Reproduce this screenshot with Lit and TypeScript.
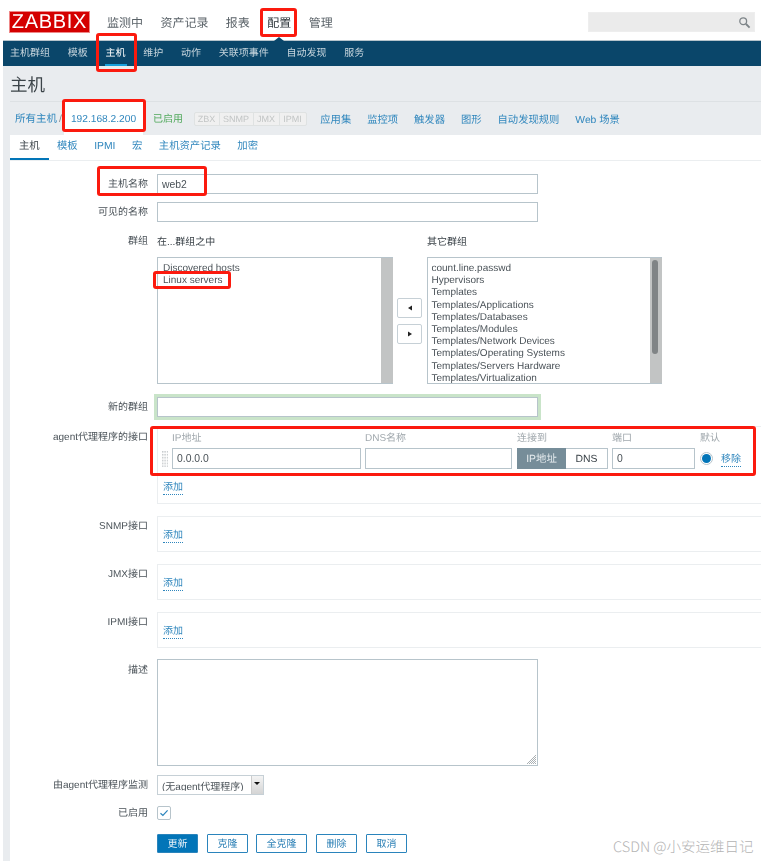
import { LitElement, html, css } from "lit";
import { customElement } from "lit/decorators.js";

@customElement("app-root")
export class AppRoot extends LitElement {
  static styles = css`
    :host {
      display: block;
      position: relative;
      width: 761px;
      height: 861px;
      overflow: hidden;
      background: #fff;
      color: #3a4248;
      font-family: "Liberation Sans", "Noto Sans CJK SC", sans-serif;
      font-size: 10px;
      text-rendering: geometricPrecision;
    }
    a { color: #2f86bd; text-decoration: none; }
    .soft { filter: blur(0.35px); }
    .header { height: 40px; display: flex; align-items: center; padding: 4px 6px 0 10px; box-sizing: border-box; }
    .logo {
      width: 79px; height: 20px; background: #d40000; color: #fff; box-sizing: border-box;
      font-size: 20px; line-height: 20px; text-align: center; letter-spacing: 0.7px;
      margin-right: 18px; box-shadow: 0 0 0 1px #e88;
    }
    .topnav { display: flex; gap: 17.4px; font-size: 12px; color: #5a6268; }
    .topnav .on { color: #2b3338; }
    .search {
      margin-left: auto; width: 167px; height: 20px; background: #ebebeb; border: 1px solid #eee; box-sizing: border-box;
      display: flex; align-items: center; justify-content: flex-end; padding-right: 3px;
    }
    .subnav {
      margin-left: 3px; height: 26px; background: #0a466a; border-top: 1px solid #b6c4cc; box-sizing: border-box;
      display: flex; gap: 17.75px; padding-left: 7px; color: #c8d6de; font-size: 10px; line-height: 26px;
    }
    .subnav .on { color: #fff; position: relative; }
    .subnav .on::after { content: ""; position: absolute; left: -1px; right: -1px; bottom: 0; height: 2px; background: #18a0dc; }
    .notch {
      position: absolute; left: 274px; top: 37px; width: 0; height: 0;
      border-left: 5px solid transparent; border-right: 5px solid transparent; border-bottom: 4px solid #0a466a;
    }
    .page { margin-left: 3px; background: #e9ecef; height: 795px; }
    .title { height: 35px; margin-left: 7px; font-size: 17.5px; line-height: 38px; color: #3c4449; border-bottom: 1px solid #dde1e4; box-sizing: content-box; }
    .crumbs { height: 33px; display: flex; align-items: center; padding-left: 12px; font-size: 10.5px; }
    .crumbs .sep { width: 7px; text-align: center; color: #888; }
    .crumbs .ip { width: 79px; height: 100%; background: #fff; text-align: center; line-height: 35px; font-size: 10.2px; margin-right: 10px; }
    .enabled { color: #4fa85a; margin: 0 10.5px 2px 0; font-size: 10px; }
    .tags { display: flex; margin-right: 13.8px; height: 14px; background: #f0f0f0; border: 1px solid #dfe2e2; box-sizing: border-box; border-radius: 2px; }
    .tags span { color: #c2c5c5; font-size: 9px; line-height: 12px; text-align: center; border-right: 1px solid #dfe2e2; box-sizing: border-box; }
    .tags span:last-child { border-right: 0; }
    .tags .t25 { width: 25px; }
    .tags .t34 { width: 34px; }
    .tags .t26 { width: 26px; }
    .links { display: flex; gap: 16px; font-size: 10.3px; }
    .panel { margin-left: 7px; background: #fff; height: 727px; margin-top: 0; }
    .tabs { height: 25px; display: flex; border-bottom: 1px solid #ebeef0; font-size: 10.35px; line-height: 24px; }
    .tabs a { padding: 0 8.25px; height: 25px; box-sizing: border-box; }
    .tabs .on { color: #3a4248; padding: 0 9px; border-bottom: 2px solid #0275b8; }
    .form { display: flex; flex-direction: column; }
    .row { display: grid; grid-template-columns: 138px 604px; column-gap: 9px; }
    .lab { text-align: right; line-height: 14px; color: #4a5258; padding-top: 1px; }
    input, .ta {
      display: block; box-sizing: border-box; height: 20px; border: 1px solid #b7c4cb; background: #fff; padding: 0 4px;
      font: inherit; font-size: 10.4px; color: #4a5258; outline: none; border-radius: 0;
    }
    .wide { width: 381px; }
    .r1 { margin-top: 13px; }
    .r1 .lab, .r2 .lab { line-height: 19px; }
    .r2 { margin-top: 8px; }
    .r3 { margin-top: 12px; line-height: 14px; }
    .glabels { display: flex; padding-top: 2px; }
    .glabels span:first-child { width: 270px; }
    .lists { display: flex; align-items: center; margin-top: 7px; }
    .list {
      width: 236px; height: 127px; box-sizing: border-box; border: 1px solid #b7c4cb; border-right: 0; display: flex; overflow: hidden;
      line-height: 12.2px; color: #4a5258; font-size: 10px;
    }
    .list.other { width: 235px; }
    .items { flex: 1; padding: 5px 5px 0; white-space: nowrap; }
    .items.right { padding-left: 3.5px; }
    .bar { width: 12px; background: #c2c4c4; position: relative; }
    .thumb { position: absolute; left: 2px; top: 2px; width: 6px; height: 94px; background: #808486; border-radius: 3px; }
    .mid { width: 34px; padding-right: 1px; box-sizing: border-box; display: flex; flex-direction: column; align-items: center; gap: 6px; }
    .mv {
      width: 25px; height: 20px; box-sizing: border-box; border: 1px solid #c6d0d6; border-radius: 2px; background: #fff;
      display: flex; align-items: center; justify-content: center;
    }
    .r4 { margin-top: 13px; }
    .r4 .lab { line-height: 19px; }
    .hl { box-shadow: 0 0 0 3px #c9e4c9; }
    .box { border: 1px solid #ebeef0; border-right: 0; box-sizing: border-box; padding-left: 4px; }
    .iface { margin-top: 9px; }
    .iface .lab { padding-top: 5px; }
    .iface .box { height: 78px; }
    .ifgrid { display: grid; grid-template-columns: 10px 193px 152px 95px 88px 60px; align-items: center; }
    .ifhead { color: #a0a8ad; line-height: 12px; height: 18px; margin-top: 3px; }
    .handle { width: 6px; height: 16px; }
    .ip-in { width: 189px; height: 21px; }
    .dns-in { width: 147px; height: 21px; }
    .port-in { width: 83px; height: 21px; }
    .toggle { display: flex; width: 91px; height: 21px; box-sizing: border-box; border: 1px solid #b7c4cb; font-size: 10.4px; line-height: 21px; text-align: center; }
    .toggle .a { width: 49px; background: #768d99; color: #e6ecef; margin: -1px 0 -1px -1px; line-height: 23px; }
    .toggle .b { flex: 1; color: #3a4248; }
    .defcell { display: flex; align-items: center; gap: 8px; }
    .radio {
      width: 13px; height: 13px; box-sizing: border-box; border-radius: 50%; border: 1px solid #b7c4cb; background: #fff;
      display: flex; align-items: center; justify-content: center;
    }
    .radio i { display: block; width: 9px; height: 9px; border-radius: 50%; background: #0275b8; }
    .dot { border-bottom: 1px dotted #2f86bd; line-height: 13px; display: inline-block; font-size: 10px; }
    .defcell .dot { margin-top: 3px; }
    .add { display: block; margin-left: 1px; width: fit-content; }
    .iface .add { margin-top: 12px; }
    .sn { margin-top: 12px; }
    .sn .lab { padding-top: 4px; }
    .sn .box { height: 36px; }
    .sn .add { margin-top: 12px; }
    .desc { margin-top: 11px; }
    .desc .lab { padding-top: 5px; }
    .ta { width: 381px; height: 107px; position: relative; }
    .grip { position: absolute; right: 0; bottom: 0; }
    .r5 { margin-top: 9px; }
    .r5 .lab { line-height: 19px; }
    .sel { width: 107px; height: 20px; box-sizing: border-box; border: 1px solid #c6d0d6; display: flex; font-size: 10px; }
    .sel .t { flex: 1; padding: 5px 0 0 4px; height: 9.5px; line-height: 14px; white-space: nowrap; color: #4a5258; overflow: hidden; }
    .sel .arr { width: 11px; background: linear-gradient(#f4f4f4, #d4d4d4); border-left: 1px solid #ccc; position: relative; }
    .sel .arr::after {
      content: ""; position: absolute; left: 2px; top: 6px; width: 0; height: 0;
      border-left: 3px solid transparent; border-right: 3px solid transparent; border-top: 3px solid #111;
    }
    .r6 { margin-top: 11px; }
    .chk { width: 14px; height: 14px; box-sizing: border-box; border: 1px solid #b7c4cb; border-radius: 2px; display: flex; align-items: center; justify-content: center; }
    .r7 { margin-top: 13px; }
    .btns { display: flex; }
    .btn {
      height: 19px; box-sizing: border-box; border: 1px solid #2a84bc; border-radius: 1px; color: #2a7fb5; background: #fff;
      font-size: 10px; line-height: 19px; text-align: center; width: 41px; margin-right: 9px;
    }
    .btn.pri { background: #0275b8; color: #e8f2f8; }
    .btn.tight { margin-right: 8px; }
    .btn.w { width: 51px; }
    .mark { position: absolute; border: 3px solid #fb1a0e; border-radius: 3px; box-sizing: border-box; pointer-events: none; }
    .wm { position: absolute; left: 613px; top: 837px; font-size: 14.5px; line-height: 20px; color: #b4b4b4; white-space: nowrap; font-family: "Noto Sans CJK SC", "Liberation Sans", sans-serif; font-weight: 300; }
  `;

  private groups = [
    "count.line.passwd", "Hypervisors", "Templates", "Templates/Applications", "Templates/Databases",
    "Templates/Modules", "Templates/Network Devices", "Templates/Operating Systems", "Templates/Servers Hardware", "Templates/Virtualization",
  ];

  private handle() {
    return html`<svg class="handle" viewBox="0 0 6 16">
      <defs><pattern id="p" width="2.4" height="2.9" patternUnits="userSpaceOnUse"><rect width="1.4" height="1.6" fill="#c5c9cb"/></pattern></defs>
      <rect width="6" height="16" fill="url(#p)"/></svg>`;
  }

  render() {
    return html`
      <div class="soft">
        <div class="header">
          <div class="logo">ZABBIX</div>
          <div class="topnav"><span>监测中</span><span>资产记录</span><span>报表</span><span class="on">配置</span><span>管理</span></div>
          <div class="search">
            <svg width="13" height="13" viewBox="0 0 13 13" fill="none" stroke="#7d8488"><circle cx="5.2" cy="5.2" r="3.4" stroke-width="1.3"/><path d="M8 8l3.6 3.6" stroke-width="1.8"/></svg>
          </div>
        </div>
        <div class="subnav">
          <span>主机群组</span><span>模板</span><span class="on">主机</span><span>维护</span><span>动作</span><span>关联项事件</span><span>自动发现</span><span>服务</span>
        </div>
        <div class="notch"></div>
        <div class="page">
          <div class="title">主机</div>
          <div class="crumbs">
            <a>所有主机</a><span class="sep">/</span>
            <a class="ip">192.168.2.200</a>
            <span class="enabled">已启用</span>
            <div class="tags"><span class="t25">ZBX</span><span class="t34">SNMP</span><span class="t26">JMX</span><span class="t26">IPMI</span></div>
            <div class="links"><a>应用集</a><a>监控项</a><a>触发器</a><a>图形</a><a>自动发现规则</a><a>Web 场景</a></div>
          </div>
          <div class="panel">
            <div class="tabs"><a class="on">主机</a><a>模板</a><a>IPMI</a><a>宏</a><a>主机资产记录</a><a>加密</a></div>
            <div class="form">
              <div class="row r1"><div class="lab">主机名称</div><input class="wide" .value=${"web2"} /></div>
              <div class="row r2"><div class="lab">可见的名称</div><input class="wide" /></div>
              <div class="row r3"><div class="lab">群组</div>
                <div>
                  <div class="glabels"><span>在...群组之中</span><span>其它群组</span></div>
                  <div class="lists">
                    <div class="list"><div class="items">Discovered hosts<br />Linux servers</div><div class="bar"></div></div>
                    <div class="mid">
                      <div class="mv"><svg width="6" height="6" viewBox="0 0 6 6"><path d="M5 0.5v5L1 3z" fill="#222"/></svg></div>
                      <div class="mv"><svg width="6" height="6" viewBox="0 0 6 6"><path d="M1 0.5v5L5 3z" fill="#222"/></svg></div>
                    </div>
                    <div class="list other"><div class="items right">${this.groups.map((g) => html`${g}<br />`)}</div><div class="bar"><div class="thumb"></div></div></div>
                  </div>
                </div>
              </div>
              <div class="row r4"><div class="lab">新的群组</div><input class="wide hl" /></div>
              <div class="row iface">
                <div class="lab">agent代理程序的接口</div>
                <div class="box">
                  <div class="ifgrid ifhead"><span></span><span>IP地址</span><span>DNS名称</span><span>连接到</span><span>端口</span><span>默认</span></div>
                  <div class="ifgrid">
                    ${this.handle()}
                    <input class="ip-in" .value=${"0.0.0.0"} />
                    <input class="dns-in" />
                    <div class="toggle"><span class="a">IP地址</span><span class="b">DNS</span></div>
                    <input class="port-in" .value=${"0"} />
                    <div class="defcell"><span class="radio"><i></i></span><a class="dot">移除</a></div>
                  </div>
                  <a class="dot add">添加</a>
                </div>
              </div>
              <div class="row sn"><div class="lab">SNMP接口</div><div class="box"><a class="dot add">添加</a></div></div>
              <div class="row sn"><div class="lab">JMX接口</div><div class="box"><a class="dot add">添加</a></div></div>
              <div class="row sn"><div class="lab">IPMI接口</div><div class="box"><a class="dot add">添加</a></div></div>
              <div class="row desc"><div class="lab">描述</div>
                <div class="ta">
                  <svg class="grip" width="11" height="11" viewBox="0 0 11 11" stroke="#aab0b3" stroke-width="1"><path d="M10 1L1 10M10 3L3 10M10 5L5 10M10 7L7 10M10 9L9 10"/></svg>
                </div>
              </div>
              <div class="row r5"><div class="lab">由agent代理程序监测</div>
                <div class="sel"><div class="t">(无agent代理程序)</div><div class="arr"></div></div>
              </div>
              <div class="row r6"><div class="lab">已启用</div>
                <div class="chk"><svg width="10" height="10" viewBox="0 0 10 10" fill="none" stroke="#2a84bc" stroke-width="1.2"><path d="M1.5 5.2l2.4 2.3L8.6 2.4"/></svg></div>
              </div>
              <div class="row r7"><div></div>
                <div class="btns"><div class="btn pri">更新</div><div class="btn tight">克隆</div><div class="btn w">全克隆</div><div class="btn">删除</div><div class="btn">取消</div></div>
              </div>
            </div>
          </div>
        </div>

        <div class="mark" style="left:260px;top:8px;width:37px;height:29px"></div>
        <div class="mark" style="left:96px;top:33px;width:41px;height:39px"></div>
        <div class="mark" style="left:62px;top:99px;width:84px;height:33px"></div>
        <div class="mark" style="left:97px;top:166px;width:110px;height:30px"></div>
        <div class="mark" style="left:153px;top:271px;width:78px;height:18px"></div>
        <div class="mark" style="left:150px;top:426px;width:606px;height:50px"></div>
      </div>
      <div class="wm">CSDN @小安运维日记</div>
    `;
  }
}
